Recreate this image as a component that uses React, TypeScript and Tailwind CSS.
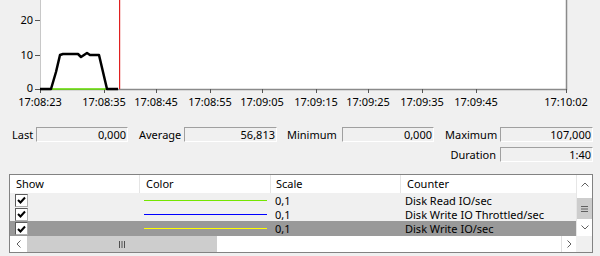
import React from "react";

const ticks: [number, string][] = [
  [40, "17:08:23"],
  [104, "17:08:35"],
  [156, "17:08:45"],
  [210, "17:08:55"],
  [262, "17:09:05"],
  [316, "17:09:15"],
  [368, "17:09:25"],
  [422, "17:09:35"],
  [476, "17:09:45"],
  [566, "17:10:02"],
];

function Chart() {
  return (
    <svg width="600" height="110" className="block">
      <rect x="40" y="0" width="526" height="89" fill="#ffffff" />
      <line x1="40.5" y1="0" x2="40.5" y2="89" stroke="#c8c8c8" strokeWidth="1" />
      <line x1="566.5" y1="0" x2="566.5" y2="90" stroke="#8a8a8a" strokeWidth="1.5" />
      <line x1="40" y1="89.5" x2="567" y2="89.5" stroke="#8a8a8a" strokeWidth="1.5" />
      {[20, 55, 89].map((y) => (
        <line key={y} x1="35" y1={y + 0.5} x2="40" y2={y + 0.5} stroke="#555" strokeWidth="1" />
      ))}
      {ticks.map(([x]) => (
        <line key={x} x1={x + 0.5} y1="89" x2={x + 0.5} y2="93" stroke="#555" strokeWidth="1" />
      ))}
      <g fontFamily="'Noto Sans', sans-serif" fontSize="11" fill="#000">
        <text x="33" y="24" textAnchor="end">20</text>
        <text x="33" y="59" textAnchor="end">10</text>
        <text x="33" y="92" textAnchor="end">0</text>
        {ticks.map(([x, t]) => (
          <text key={t} x={x} y="106" textAnchor="middle">{t}</text>
        ))}
      </g>
      <line x1="52" y1="89" x2="107" y2="89" stroke="#66e000" strokeWidth="1.5" />
      <rect x="119" y="0" width="1.2" height="89" fill="#e02020" />
      <polyline
        points="40,89 51,89 56,72 60,55 63,54 78,54 81,57 87,53 90,55 99,55 103,72 107,89 118,89"
        fill="none"
        stroke="#000"
        strokeWidth="2.5"
        strokeLinejoin="round"
      />
    </svg>
  );
}

function StatBox({ value, w }: { value: string; w: string }) {
  return (
    <div
      className={`${w} h-[15px] border border-t-[#a0a0a0] border-l-[#a0a0a0] border-b-white border-r-white bg-[#f0f0f0] flex items-center justify-end pr-[1px] leading-none`}
    >
      {value}
    </div>
  );
}

function Check() {
  return (
    <div className="w-[13px] h-[13px] bg-white border border-[#5a5a5a] border-r-[#b0b0b0] border-b-[#b0b0b0] flex items-center justify-center">
      <svg width="9" height="8" viewBox="0 0 9 8">
        <polyline points="1,4 3.5,6.5 8,1.5" fill="none" stroke="#000" strokeWidth="2" />
      </svg>
    </div>
  );
}

function Row({ color, counter, selected }: { color: string; counter: string; selected?: boolean }) {
  return (
    <div className={`flex items-center leading-none ${selected ? "h-[15px] bg-[#999999]" : "h-[14px]"}`}>
      <div className="w-[130px] pl-[5px] flex items-center">
        <Check />
      </div>
      <div className="w-[131px] pl-[4px] flex items-center">
        <div className="w-[123px] h-px" style={{ backgroundColor: color }} />
      </div>
      <div className="w-[130px] pl-[4px]">0,1</div>
      <div className="flex-1 pl-[4px]">{counter}</div>
    </div>
  );
}

export default function App() {
  return (
    <div className="w-[600px] h-[256px] bg-[#f0f0f0] overflow-hidden text-[11px] leading-[14px] text-black font-['Noto_Sans',sans-serif]">
      <Chart />
      <div className="flex items-center mt-[17px] h-[15px]">
        <div className="w-[24px] ml-[12px]">Last</div>
        <StatBox value="0,000" w="w-[92px]" />
        <div className="w-[45px] ml-[11px]">Average</div>
        <StatBox value="56,813" w="w-[93px]" />
        <div className="w-[55px] ml-[10px]">Minimum</div>
        <StatBox value="0,000" w="w-[92px]" />
        <div className="w-[55px] ml-[11px]">Maximum</div>
        <StatBox value="107,000" w="w-[93px]" />
      </div>
      <div className="flex items-center justify-end mt-[5px] h-[15px] pr-[7px]">
        <div className="mr-[4px]">Duration</div>
        <StatBox value="1:40" w="w-[93px]" />
      </div>
      <div className="ml-[9px] mt-[12px] w-[584px] h-[79px] border border-[#828282] flex flex-col">
        <div className="flex h-[61px]">
          <div className="w-[566px] flex flex-col">
            <div className="flex h-[18px] bg-white items-center">
              <div className="w-[130px] h-full pl-[6px] flex items-center border-r border-[#e5e5e5]">Show</div>
              <div className="w-[131px] h-full pl-[6px] flex items-center border-r border-[#e5e5e5]">Color</div>
              <div className="w-[130px] h-full pl-[5px] flex items-center border-r border-[#e5e5e5]">Scale</div>
              <div className="flex-1 h-full pl-[6px] flex items-center">Counter</div>
            </div>
            <Row color="#74e600" counter="Disk Read IO/sec" />
            <Row color="#0000ff" counter="Disk Write IO Throttled/sec" />
            <Row color="#ffff00" counter="Disk Write IO/sec" selected />
          </div>
          <div className="w-[16px] flex flex-col bg-white border-l border-[#e6e6e6]">
            <div className="h-[18px] flex items-center justify-center">
              <svg width="8" height="5" viewBox="0 0 8 5">
                <polyline points="0.5,4.5 4,1 7.5,4.5" fill="none" stroke="#606060" strokeWidth="1" />
              </svg>
            </div>
            <div className="h-[5px]" />
            <div className="h-[21px] bg-[#cdcdcd] flex items-center justify-center">
              <svg width="7" height="6" viewBox="0 0 7 6">
                <line x1="0" y1="0.5" x2="7" y2="0.5" stroke="#606060" />
                <line x1="0" y1="3" x2="7" y2="3" stroke="#606060" />
                <line x1="0" y1="5.5" x2="7" y2="5.5" stroke="#606060" />
              </svg>
            </div>
            <div className="flex-1 flex items-center justify-center">
              <svg width="8" height="5" viewBox="0 0 8 5">
                <polyline points="0.5,0.5 4,4 7.5,0.5" fill="none" stroke="#606060" strokeWidth="1" />
              </svg>
            </div>
          </div>
        </div>
        <div className="flex h-[16px]">
          <div className="w-[566px] flex bg-white">
            <div className="w-[17px] flex items-center justify-center">
              <svg width="5" height="8" viewBox="0 0 5 8">
                <polyline points="4.5,0.5 1,4 4.5,7.5" fill="none" stroke="#606060" strokeWidth="1" />
              </svg>
            </div>
            <div className="w-[190px] bg-[#cdcdcd] flex items-center justify-center">
              <svg width="6" height="7" viewBox="0 0 6 7">
                <line x1="0.5" y1="0" x2="0.5" y2="7" stroke="#505050" />
                <line x1="3" y1="0" x2="3" y2="7" stroke="#505050" />
                <line x1="5.5" y1="0" x2="5.5" y2="7" stroke="#505050" />
              </svg>
            </div>
            <div className="flex-1" />
            <div className="w-[15px] border-l border-[#e0e0e0] flex items-center justify-center">
              <svg width="5" height="8" viewBox="0 0 5 8">
                <polyline points="0.5,0.5 4,4 0.5,7.5" fill="none" stroke="#606060" strokeWidth="1" />
              </svg>
            </div>
          </div>
          <div className="w-[16px] bg-[#f0f0f0]" />
        </div>
      </div>
    </div>
  );
}
